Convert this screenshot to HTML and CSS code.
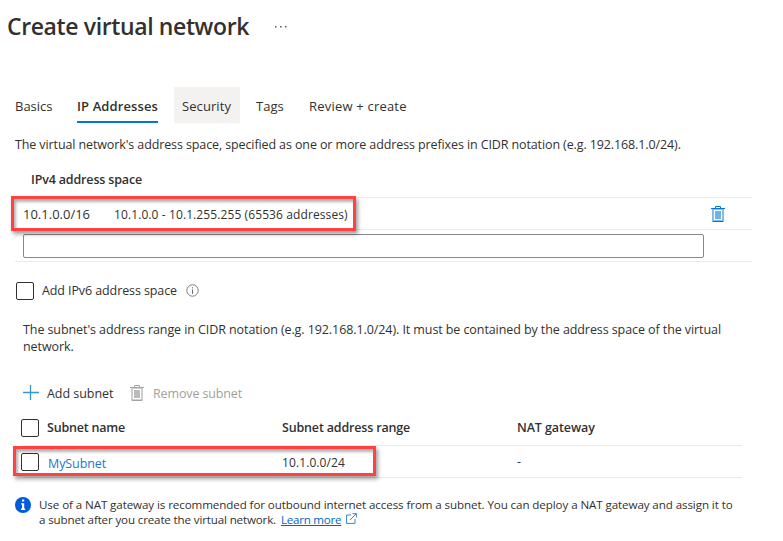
FILE: index.html
```html
<!DOCTYPE html>
<html lang="en">
<head>
<meta charset="utf-8">
<title>Create virtual network</title>
<link rel="stylesheet" href="styles.css">
</head>
<body>
<header class="header">
  <h1 class="title">Create virtual network</h1>
  <svg class="more" width="12" height="2" viewBox="0 0 12 2"><path d="M0 0h1.5v1.5H0zM5 0h1.5v1.5H5zM10 0h1.5v1.5H10z" fill="#5a5856"/></svg>
</header>

<nav class="tabs">
  <a class="tab tab-basics">Basics</a>
  <a class="tab tab-active"><span>IP Addresses</span></a>
  <a class="tab tab-hover">Security</a>
  <a class="tab tab-tags">Tags</a>
  <a class="tab tab-review">Review + create</a>
</nav>

<main>
  <p class="intro">The virtual network's address space, specified as one or more address prefixes in CIDR notation (e.g. 192.168.1.0/24).</p>

  <section class="space">
    <h2 class="space-head">IPv4 address space</h2>
    <div class="space-row">
      <span class="cidr">10.1.0.0/16</span>
      <span class="range">10.1.0.0 - 10.1.255.255 (65536 addresses)</span>
      <svg class="trash" width="14" height="16" viewBox="0 0 14 16"><path d="M2 3h10v12H2z" fill="#fff" stroke="#83bde9" stroke-width="2"/><path d="M4 5h6v8H4z" fill="#71b2e6"/><path d="M0 2.5h14M2 15.5h10M4.5 2V.5h5V2" fill="none" stroke="#0078d4"/></svg>
      <div class="callout callout-space"></div>
    </div>
    <div class="space-row space-entry"><input class="entry" type="text" aria-label="Address space"></div>
  </section>

  <label class="ipv6">
    <span class="check"></span>
    <span class="ipv6-text">Add IPv6 address space</span>
    <svg class="ipv6-info" width="13" height="13" viewBox="0 0 13 13"><circle cx="6.5" cy="6.5" r="5.7" fill="none" stroke="#706e6c" stroke-width=".9"/><path d="M6 3.2h1v1.2H6zM6 5.4h1V10H6z" fill="#706e6c"/></svg>
  </label>

  <p class="subnet-intro">The subnet's address range in CIDR notation (e.g. 192.168.1.0/24). It must be contained by the address space of the virtual<br>network.</p>

  <div class="toolbar">
    <svg width="16" height="16" viewBox="0 0 16 16"><path d="M0 7.5h16M7.5 0v15" stroke="#3996de" stroke-width="1.3"/></svg>
    <span class="add">Add subnet</span>
    <svg class="trash-off" width="14" height="16" viewBox="0 0 14 16"><path d="M2 3h10v12H2z" fill="#fff" stroke="#c4c3c2" stroke-width="1.6"/><path d="M4 5h6v8H4z" fill="#bdbcbb"/><path d="M0 2.5h14M2 15.5h10M4.5 2V.5h5V2" fill="none" stroke="#a6a4a2"/></svg>
    <span class="remove">Remove subnet</span>
  </div>

  <section class="subnets">
    <div class="grid-row grid-head">
      <span class="check"></span><span class="head-name">Subnet name</span><span class="head-range">Subnet address range</span><span class="head-nat">NAT gateway</span>
    </div>
    <div class="grid-row grid-item">
      <span class="check"></span><a class="link">MySubnet</a><span class="item-range">10.1.0.0/24</span><span>-</span>
      <div class="callout callout-subnet"></div>
    </div>
  </section>

  <aside class="note">
    <svg width="16" height="16" viewBox="0 0 16 16"><circle cx="8" cy="8" r="8" fill="#015cda"/><path d="M7 2.6h2.2v2H7zM6 6.2h3.2v5.4h1V13H6v-1.4h1V7.5H6z" fill="#fff"/></svg>
    <p class="note-text">Use of a NAT gateway is recommended for outbound internet access from a subnet. You can deploy a NAT gateway and assign it to<br><span class="note-tail">a subnet after you create the virtual network.</span> <a class="learn">Learn more</a><svg class="external" width="11" height="11" viewBox="0 0 11 11"><path d="M5 2H.6v8.4H9V6M6.5.6h3.9v3.9M10.2.8 4 7" fill="none" stroke="#3c83d2"/></svg></p>
  </aside>
</main>
</body>
</html>
```
FILE: styles.css
```css
* { box-sizing: border-box; }

body {
  margin: 0;
  background: #fff;
  color: #323130;
  font: 12.5px/17px "Open Sans", "Noto Sans", sans-serif;
  white-space: nowrap;
}

h1, h2, p { margin: 0; }
svg { display: block; flex: none; }

.header { display: flex; align-items: center; height: 54px; padding-left: 7px; }
.title { width: 268px; padding-bottom: 1px; font-size: 23px; line-height: 31px; font-weight: 600; letter-spacing: -.38px; }

.tabs { display: flex; gap: 0; margin-top: 33px; padding-left: 7px; font-size: 13px; line-height: 38px; }
.tab { height: 36px; padding: 0 8px; }
.tab-basics { width: 62px; }
.tab-active { width: 105px; font-weight: 600; letter-spacing: .11px; }
.tab-active span { display: block; width: 81px; height: 36px; border-bottom: 2px solid #0078d4; }
.tab-hover { width: 66px; background: #f3f2f1; letter-spacing: .08px; }
.tab-tags { margin-left: 8px; width: 53px; }
.tab-review { letter-spacing: .2px; }

.intro { margin: 13px 0 0 15px; letter-spacing: -.112px; }

.space { width: 737px; margin: 18px 0 0 15px; }
.space-head { height: 26px; padding-left: 16px; font-size: 12.5px; line-height: 17px; font-weight: 600; letter-spacing: -.16px; }
.space-row { position: relative; display: flex; align-items: center; height: 32px; padding-left: 8px; border-top: 1px solid #edebe9; }
.cidr { width: 91px; padding-top: 2px; font-size: 13px; }
.range { width: 597px; padding-top: 2px; font-size: 12px; letter-spacing: .1px; }
.trash { margin-top: 1px; }
.space-entry { height: 33px; border-bottom: 1px solid #edebe9; }
.entry { width: 681px; height: 24px; padding: 0 8px; border: 1px solid #8a8886; border-radius: 2px; outline: 0; font: inherit; }

.callout {
  position: absolute;
  z-index: 1;
  border: 3px solid #ff4343;
  box-shadow: 2px 3px 4px rgba(0, 0, 0, .38), inset 2px 3px 3px rgba(0, 0, 0, .3);
  pointer-events: none;
}
.callout-space { left: -4px; top: -2px; width: 345px; height: 35px; }
.callout-subnet { left: -10px; top: 0; width: 363px; height: 30px; }

.check { flex: none; width: 18px; height: 18px; border: 1px solid #323130; border-radius: 2px; background: #fff; }
.ipv6 { display: flex; align-items: center; height: 18px; margin: 20px 0 0 16px; }
.ipv6-text { width: 144px; margin-left: 8px; padding-bottom: 2px; letter-spacing: -.1px; }
.ipv6-info { margin-bottom: 2px; }

.subnet-intro { margin: 21px 0 0 23px; letter-spacing: -.084px; }

.toolbar { display: flex; align-items: center; height: 18px; margin: 29px 0 0 23px; }
.add { margin-left: 8px; width: 83px; letter-spacing: -.04px; }
.remove { margin-left: 9px; color: #a19f9d; letter-spacing: -.13px; }

.subnets { width: 719px; margin: 9px 0 0 23px; }
.grid-row { position: relative; display: grid; grid-template-columns: 24px 235px 235px 1fr; align-items: center; height: 32px; border-bottom: 1px solid #edebe9; }
.grid-row .check { margin-left: -2px; }
.grid-head { height: 35px; font-weight: 600; }
.head-name, .head-range, .head-nat { padding-bottom: 2px; }
.head-name { letter-spacing: -.2px; }
.head-range { letter-spacing: -.17px; }
.head-nat { letter-spacing: -.1px; }
.link { color: #1b76d1; padding: 4px 0 0 1px; letter-spacing: -.1px; }
.item-range { padding-top: 2px; font-size: 12px; letter-spacing: .1px; }

.note { display: flex; margin: 19px 0 0 15px; font-size: 11.6px; line-height: 15px; }
.note-text { margin-left: 8px; letter-spacing: -.093px; }
.note-tail { letter-spacing: -.15px; }
.learn { margin-left: 2px; color: #0067c0; letter-spacing: -.25px; text-decoration: underline; }
.external { display: inline-block; margin-left: 5px; }
```
